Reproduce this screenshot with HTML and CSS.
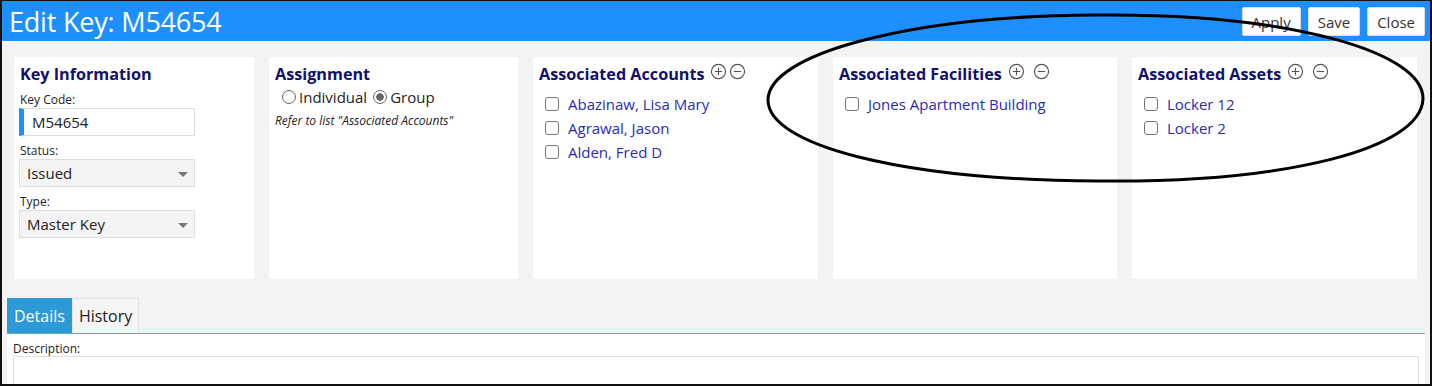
FILE: index.html
```html
<!DOCTYPE html>
<html lang="en">
<head>
  <meta charset="UTF-8">
  <meta name="viewport" content="width=device-width, initial-scale=1.0">
  <title>Edit Key: M54654</title>
  <link rel="stylesheet" href="styles.css">
</head>
<body>
  <div class="frame">
    <div class="titlebar">
      <h1>Edit Key: M54654</h1>
      <div class="actions">
        <button class="btn">Apply</button>
        <button class="btn">Save</button>
        <button class="btn">Close</button>
      </div>
    </div>

    <div class="panels">
      <div class="panel">
        <h2>Key Information</h2>
        <label class="field-label">Key Code:</label>
        <div class="input active">M54654</div>
        <label class="field-label">Status:</label>
        <div class="select">Issued<span class="caret"></span></div>
        <label class="field-label">Type:</label>
        <div class="select">Master Key<span class="caret"></span></div>
      </div>

      <div class="panel">
        <h2>Assignment</h2>
        <div class="radios">
          <span class="radio"></span>Individual
          <span class="radio checked"></span>Group
        </div>
        <p class="hint">Refer to list "Associated Accounts"</p>
      </div>

      <div class="panel">
        <h2>Associated Accounts
          <span class="icons tight">
            <svg class="ico" viewBox="0 0 18 18"><circle cx="9" cy="9" r="7.5"/><path d="M5 9h8M9 5v8"/></svg>
            <svg class="ico" viewBox="0 0 18 18"><circle cx="9" cy="9" r="7.5"/><path d="M5 9h8"/></svg>
          </span>
        </h2>
        <ul class="items">
          <li><span class="check"></span><a href="#">Abazinaw, Lisa Mary</a></li>
          <li><span class="check"></span><a href="#">Agrawal, Jason</a></li>
          <li><span class="check"></span><a href="#">Alden, Fred D</a></li>
        </ul>
      </div>

      <div class="panel">
        <h2>Associated Facilities
          <span class="icons">
            <svg class="ico" viewBox="0 0 18 18"><circle cx="9" cy="9" r="7.5"/><path d="M5 9h8M9 5v8"/></svg>
            <svg class="ico" viewBox="0 0 18 18"><circle cx="9" cy="9" r="7.5"/><path d="M5 9h8"/></svg>
          </span>
        </h2>
        <ul class="items">
          <li><span class="check"></span><a href="#">Jones Apartment Building</a></li>
        </ul>
      </div>

      <div class="panel">
        <h2>Associated Assets
          <span class="icons">
            <svg class="ico" viewBox="0 0 18 18"><circle cx="9" cy="9" r="7.5"/><path d="M5 9h8M9 5v8"/></svg>
            <svg class="ico" viewBox="0 0 18 18"><circle cx="9" cy="9" r="7.5"/><path d="M5 9h8"/></svg>
          </span>
        </h2>
        <ul class="items">
          <li><span class="check"></span><a href="#">Locker 12</a></li>
          <li><span class="check"></span><a href="#">Locker 2</a></li>
        </ul>
      </div>
    </div>

    <div class="tabs">
      <span class="tab current">Details</span>
      <span class="tab">History</span>
    </div>
    <div class="tab-body">
      <label class="field-label">Description:</label>
      <div class="textarea"></div>
    </div>

    <!-- hand drawn annotation -->
    <svg class="markup" width="1432" height="386" viewBox="0 0 1432 386">
      <path d="M1096 15 C1290 13 1424 52 1423 99 C1421 148 1290 183 1098 181 C900 180 768 145 768 100 C768 55 905 16 1096 15 Z"
            fill="none" stroke="#000" stroke-width="3"/>
    </svg>
  </div>
</body>
</html>
```

FILE: styles.css
```css
body {
  margin: 0;
  font-family: "Open Sans", "Noto Sans", sans-serif;
  color: #222;
}
.frame {
  position: relative;
  height: 386px;
  box-sizing: border-box;
  border: 2px solid #111;
  border-top-width: 1px;
  background-color: #f3f3f3;
  overflow: hidden;
}
.titlebar {
  display: flex;
  justify-content: space-between;
  align-items: center;
  height: 40px;
  background-color: #1e8fff;
  padding: 0 5px 0 7px;
}
.titlebar h1 {
  margin: 0;
  font-size: 27px;
  font-weight: normal;
  color: #fff;
  letter-spacing: -0.2px;
}
.actions {
  display: flex;
  gap: 7px;
  margin-top: 1px;
}
.btn {
  font-family: inherit;
  font-size: 15px;
  color: #333;
  background: #fff;
  border: 1px solid #dcdcdc;
  border-radius: 2px;
  height: 29px;
  padding: 0 9px;
}
.panels {
  display: grid;
  grid-template-columns: 240px 249px 285px 284px 285px;
  column-gap: 15px;
  height: 222px;
  padding: 16px 0 0 12px;
}
.panel {
  background: #fff;
  padding: 7px 6px;
}
.panel h2 {
  margin: 0 0 2px;
  font-size: 16.2px;
  font-weight: bold;
  color: #10106e;
  line-height: 20px;
  display: flex;
  align-items: center;
}
.field-label {
  display: block;
  font-size: 12px;
  line-height: 14px;
  margin-top: 8px;
  color: #222;
}
.panel h2 + .field-label {
  margin-top: 9px;
}
.input, .select {
  box-sizing: border-box;
  width: 176px;
  height: 28px;
  margin-top: 1px;
  border: 1px solid #ddd;
  font-size: 15px;
  line-height: 26px;
  padding-left: 7px;
  position: relative;
  margin-left: -1px;
}
.input.active {
  border-left: 5px solid #1e8fff;
  padding-left: 8px;
}
.select {
  background: #f4f4f4;
  padding-left: 7px;
}
.caret {
  position: absolute;
  right: 6px;
  top: 12px;
  border-left: 5px solid transparent;
  border-right: 5px solid transparent;
  border-top: 5px solid #777;
}
.radios {
  display: flex;
  align-items: center;
  font-size: 15px;
  line-height: 22px;
  margin: 2px 0 0 7px;
}
.radio {
  width: 14px;
  height: 14px;
  border: 1px solid #666;
  border-radius: 50%;
  margin-right: 3px;
  box-sizing: border-box;
}
.radio.checked {
  margin-left: 6px;
  background: radial-gradient(circle, #666 0 3.5px, #fff 4px);
}
.hint {
  font-size: 12px;
  font-style: italic;
  margin: 4px 0 0;
  color: #222;
}
.icons {
  display: inline-flex;
  gap: 8px;
  margin-left: 6px;
  margin-top: -6px;
}
.icons.tight {
  gap: 2px;
  margin-left: 5px;
}
.ico {
  width: 17px;
  height: 17px;
  fill: none;
  stroke: #555;
  stroke-width: 1.2;
}
.items {
  list-style: none;
  margin: 8px 0 0;
  padding: 0 0 0 6px;
}
.items li {
  display: flex;
  align-items: center;
  height: 24px;
  font-size: 15px;
}
.check {
  width: 14px;
  height: 14px;
  box-sizing: border-box;
  border: 1px solid #777;
  border-radius: 3px;
  margin-right: 9px;
}
.items a {
  color: #2b2bb5;
  text-decoration: none;
}
.tabs {
  display: flex;
  margin: 19px 0 0 5px;
}
.tab {
  font-size: 16px;
  line-height: 34px;
  padding: 0 6px;
  background: #f5f5f5;
  border: 1px solid #e3e3e3;
  border-bottom: none;
  color: #222;
}
.tab.current {
  background: #2b9ad6;
  color: #fff;
  border-color: #2b9ad6;
}
.tab-body {
  background: #fff;
  margin: 0 5px 0 5px;
  border-top: 1px solid #62a9cf;
  padding: 1px 6px 0;
  height: 60px;
}
.tab-body .field-label {
  margin-top: 7px;
}
.textarea {
  border: 1px solid #e0e0e0;
  height: 40px;
  margin-top: 0;
}
.markup {
  position: absolute;
  left: -2px;
  top: -1px;
  pointer-events: none;
}
```
